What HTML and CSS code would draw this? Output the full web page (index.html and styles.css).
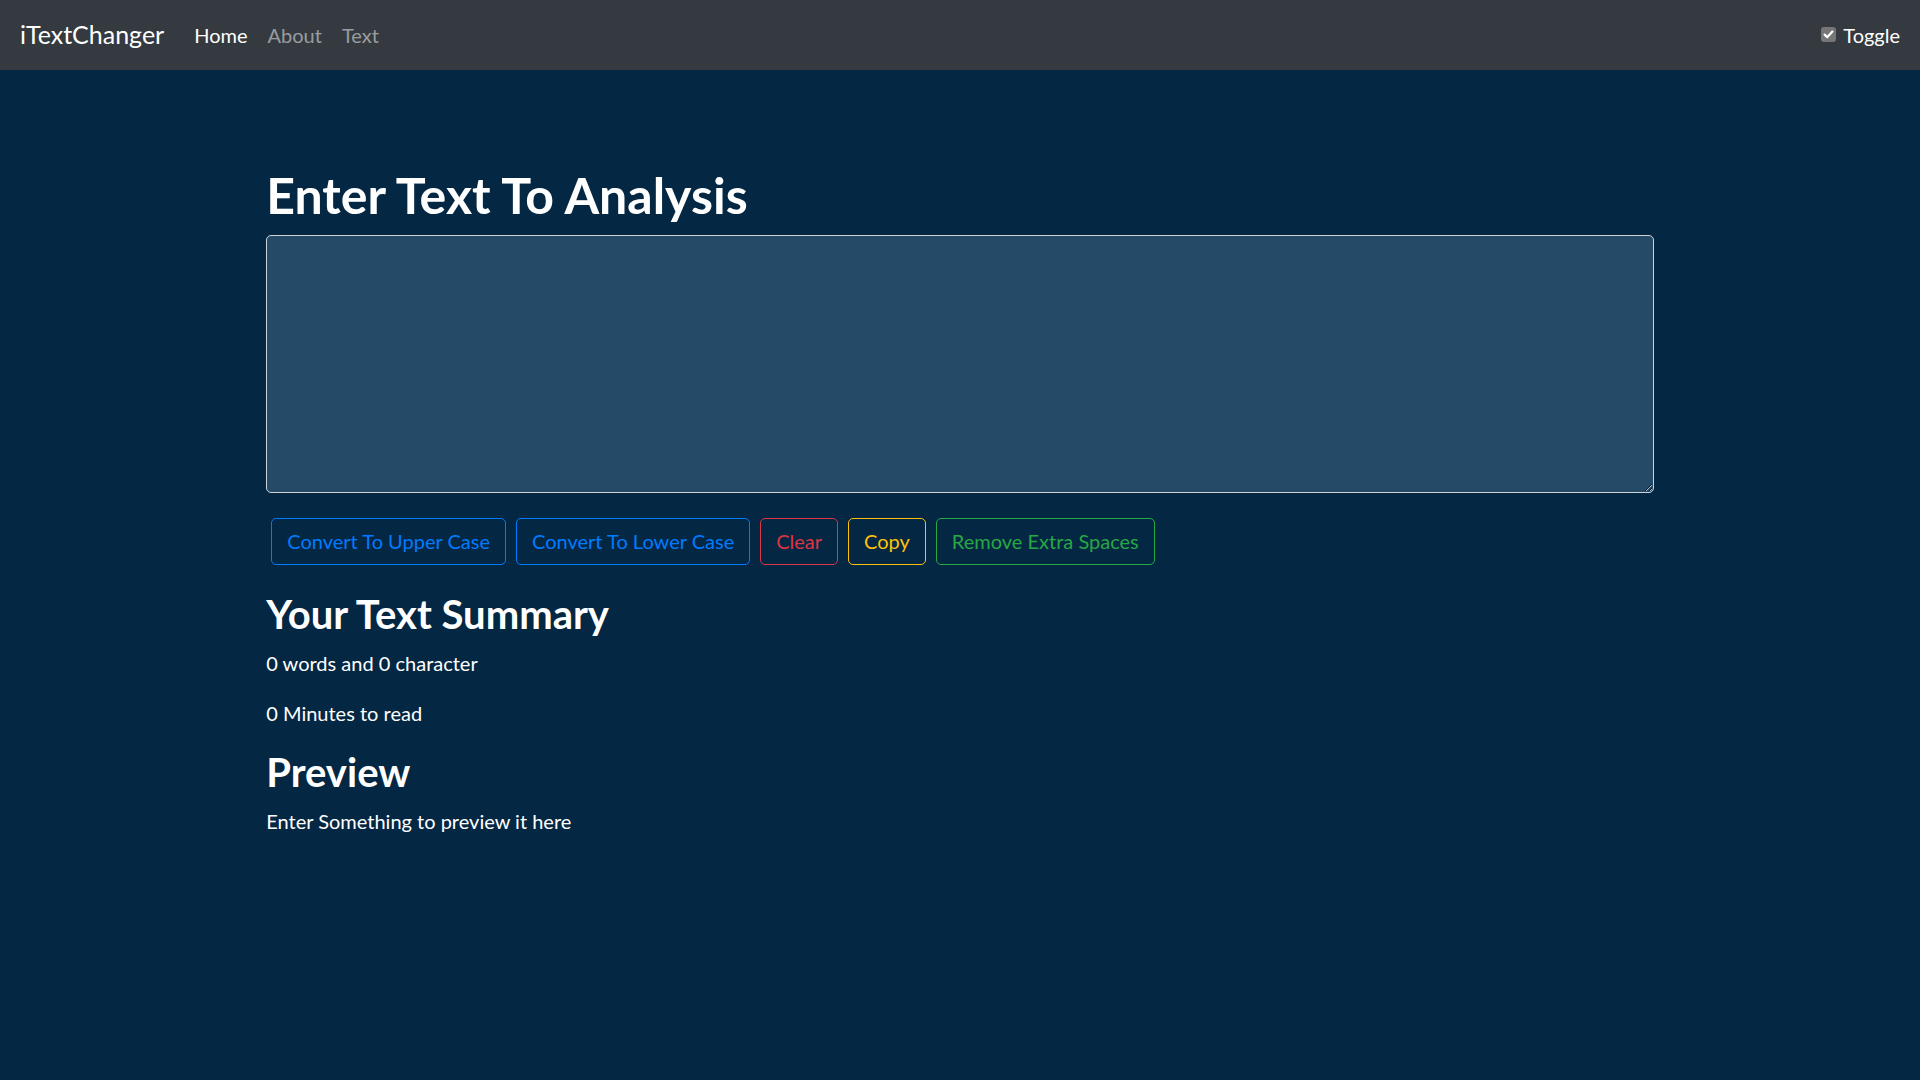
FILE: index.html
```html
<!DOCTYPE html>
<html lang="en">
<head>
<meta charset="utf-8">
<title>iTextChanger</title>
<link rel="stylesheet" href="styles.css">
</head>
<body>
<nav class="navbar">
  <a class="brand" href="#">iTextChanger</a>
  <ul class="nav-links">
    <li><a class="nav-link active" href="#">Home</a></li>
    <li><a class="nav-link" href="#">About</a></li>
    <li><a class="nav-link" href="#">Text</a></li>
  </ul>
  <label class="toggle">
    <span class="check-box"><svg viewBox="0 0 15 15" width="15" height="15"><path d="M3.6 7.6 L6.2 10.2 L11.4 4.6" fill="none" stroke="#ffffff" stroke-width="2.2" stroke-linecap="round" stroke-linejoin="round"/></svg></span>
    <span class="toggle-text">Toggle</span>
  </label>
</nav>
<main class="container">
  <h1 class="title">Enter Text To Analysis</h1>
  <div class="area-wrap">
    <textarea class="text-input" rows="8"></textarea>
  </div>
  <div class="btn-row">
    <button class="btn btn-primary">Convert To Upper Case</button>
    <button class="btn btn-primary">Convert To Lower Case</button>
    <button class="btn btn-danger">Clear</button>
    <button class="btn btn-warning">Copy</button>
    <button class="btn btn-success">Remove Extra Spaces</button>
  </div>
  <section class="summary">
    <h2 class="sub">Your Text Summary</h2>
    <p class="line">0 words and 0 character</p>
    <p class="line">0 Minutes to read</p>
    <h2 class="sub">Preview</h2>
    <p class="line">Enter Something to preview it here</p>
  </section>
</main>
</body>
</html>
```
FILE: styles.css
```css
* { box-sizing: border-box; }
html, body { margin: 0; padding: 0; }
body {
  background: #042743;
  color: #ffffff;
  font-family: "Lato", "Open Sans", sans-serif;
  font-size: 20px;
  line-height: 1.5;
  min-height: 1080px;
}
.navbar {
  height: 70px;
  background: #343a40;
  display: flex;
  align-items: center;
  padding: 0 20px;
}
.brand {
  color: #ffffff;
  text-decoration: none;
  font-size: 25px;
  line-height: 1.5;
  margin-right: 20px;
}
.nav-links {
  list-style: none;
  display: flex;
  margin: 0;
  padding: 0;
}
.nav-link {
  display: block;
  padding: 10px 10px;
  color: rgba(255,255,255,0.5);
  text-decoration: none;
  font-size: 20px;
}
.nav-link.active { color: #ffffff; }
.toggle {
  margin-left: auto;
  display: flex;
  align-items: center;
  font-size: 20px;
  color: #ffffff;
}
.check-box {
  width: 15px;
  height: 15px;
  border-radius: 3px;
  background: #767676;
  display: flex;
  margin-right: 7px;
  margin-top: -2px;
}
.container {
  width: 1387.5px;
  margin: 0 auto;
  padding-top: 95px;
}
.title {
  font-size: 50px;
  line-height: 60px;
  font-weight: 700;
  margin: 0 0 10px;
}
.area-wrap { margin-bottom: 20px; }
.text-input {
  display: block;
  width: 100%;
  height: 257.5px;
  background: rgb(36,74,104);
  color: #ffffff;
  border: 1.25px solid #ced4da;
  border-radius: 5px;
  padding: 7.5px 15px;
  font-family: inherit;
  font-size: 20px;
  line-height: 1.5;
}
.btn-row {
  display: flex;
  flex-wrap: wrap;
}
.btn {
  margin: 5px;
  background: transparent;
  font-family: inherit;
  font-size: 20px;
  line-height: 30px;
  padding: 7.5px 15px;
  border: 1.25px solid;
  border-radius: 5px;
}
.btn-primary { color: #007bff; border-color: #007bff; }
.btn-danger { color: #dc3545; border-color: #dc3545; }
.btn-warning { color: #ffc107; border-color: #ffc107; }
.btn-success { color: #28a745; border-color: #28a745; }
.summary { margin-top: 20px; }
.sub {
  font-size: 40px;
  line-height: 48px;
  font-weight: 700;
  margin: 0 0 10px;
}
.line {
  margin: 0 0 20px;
  font-size: 20px;
  line-height: 30px;
}
```
